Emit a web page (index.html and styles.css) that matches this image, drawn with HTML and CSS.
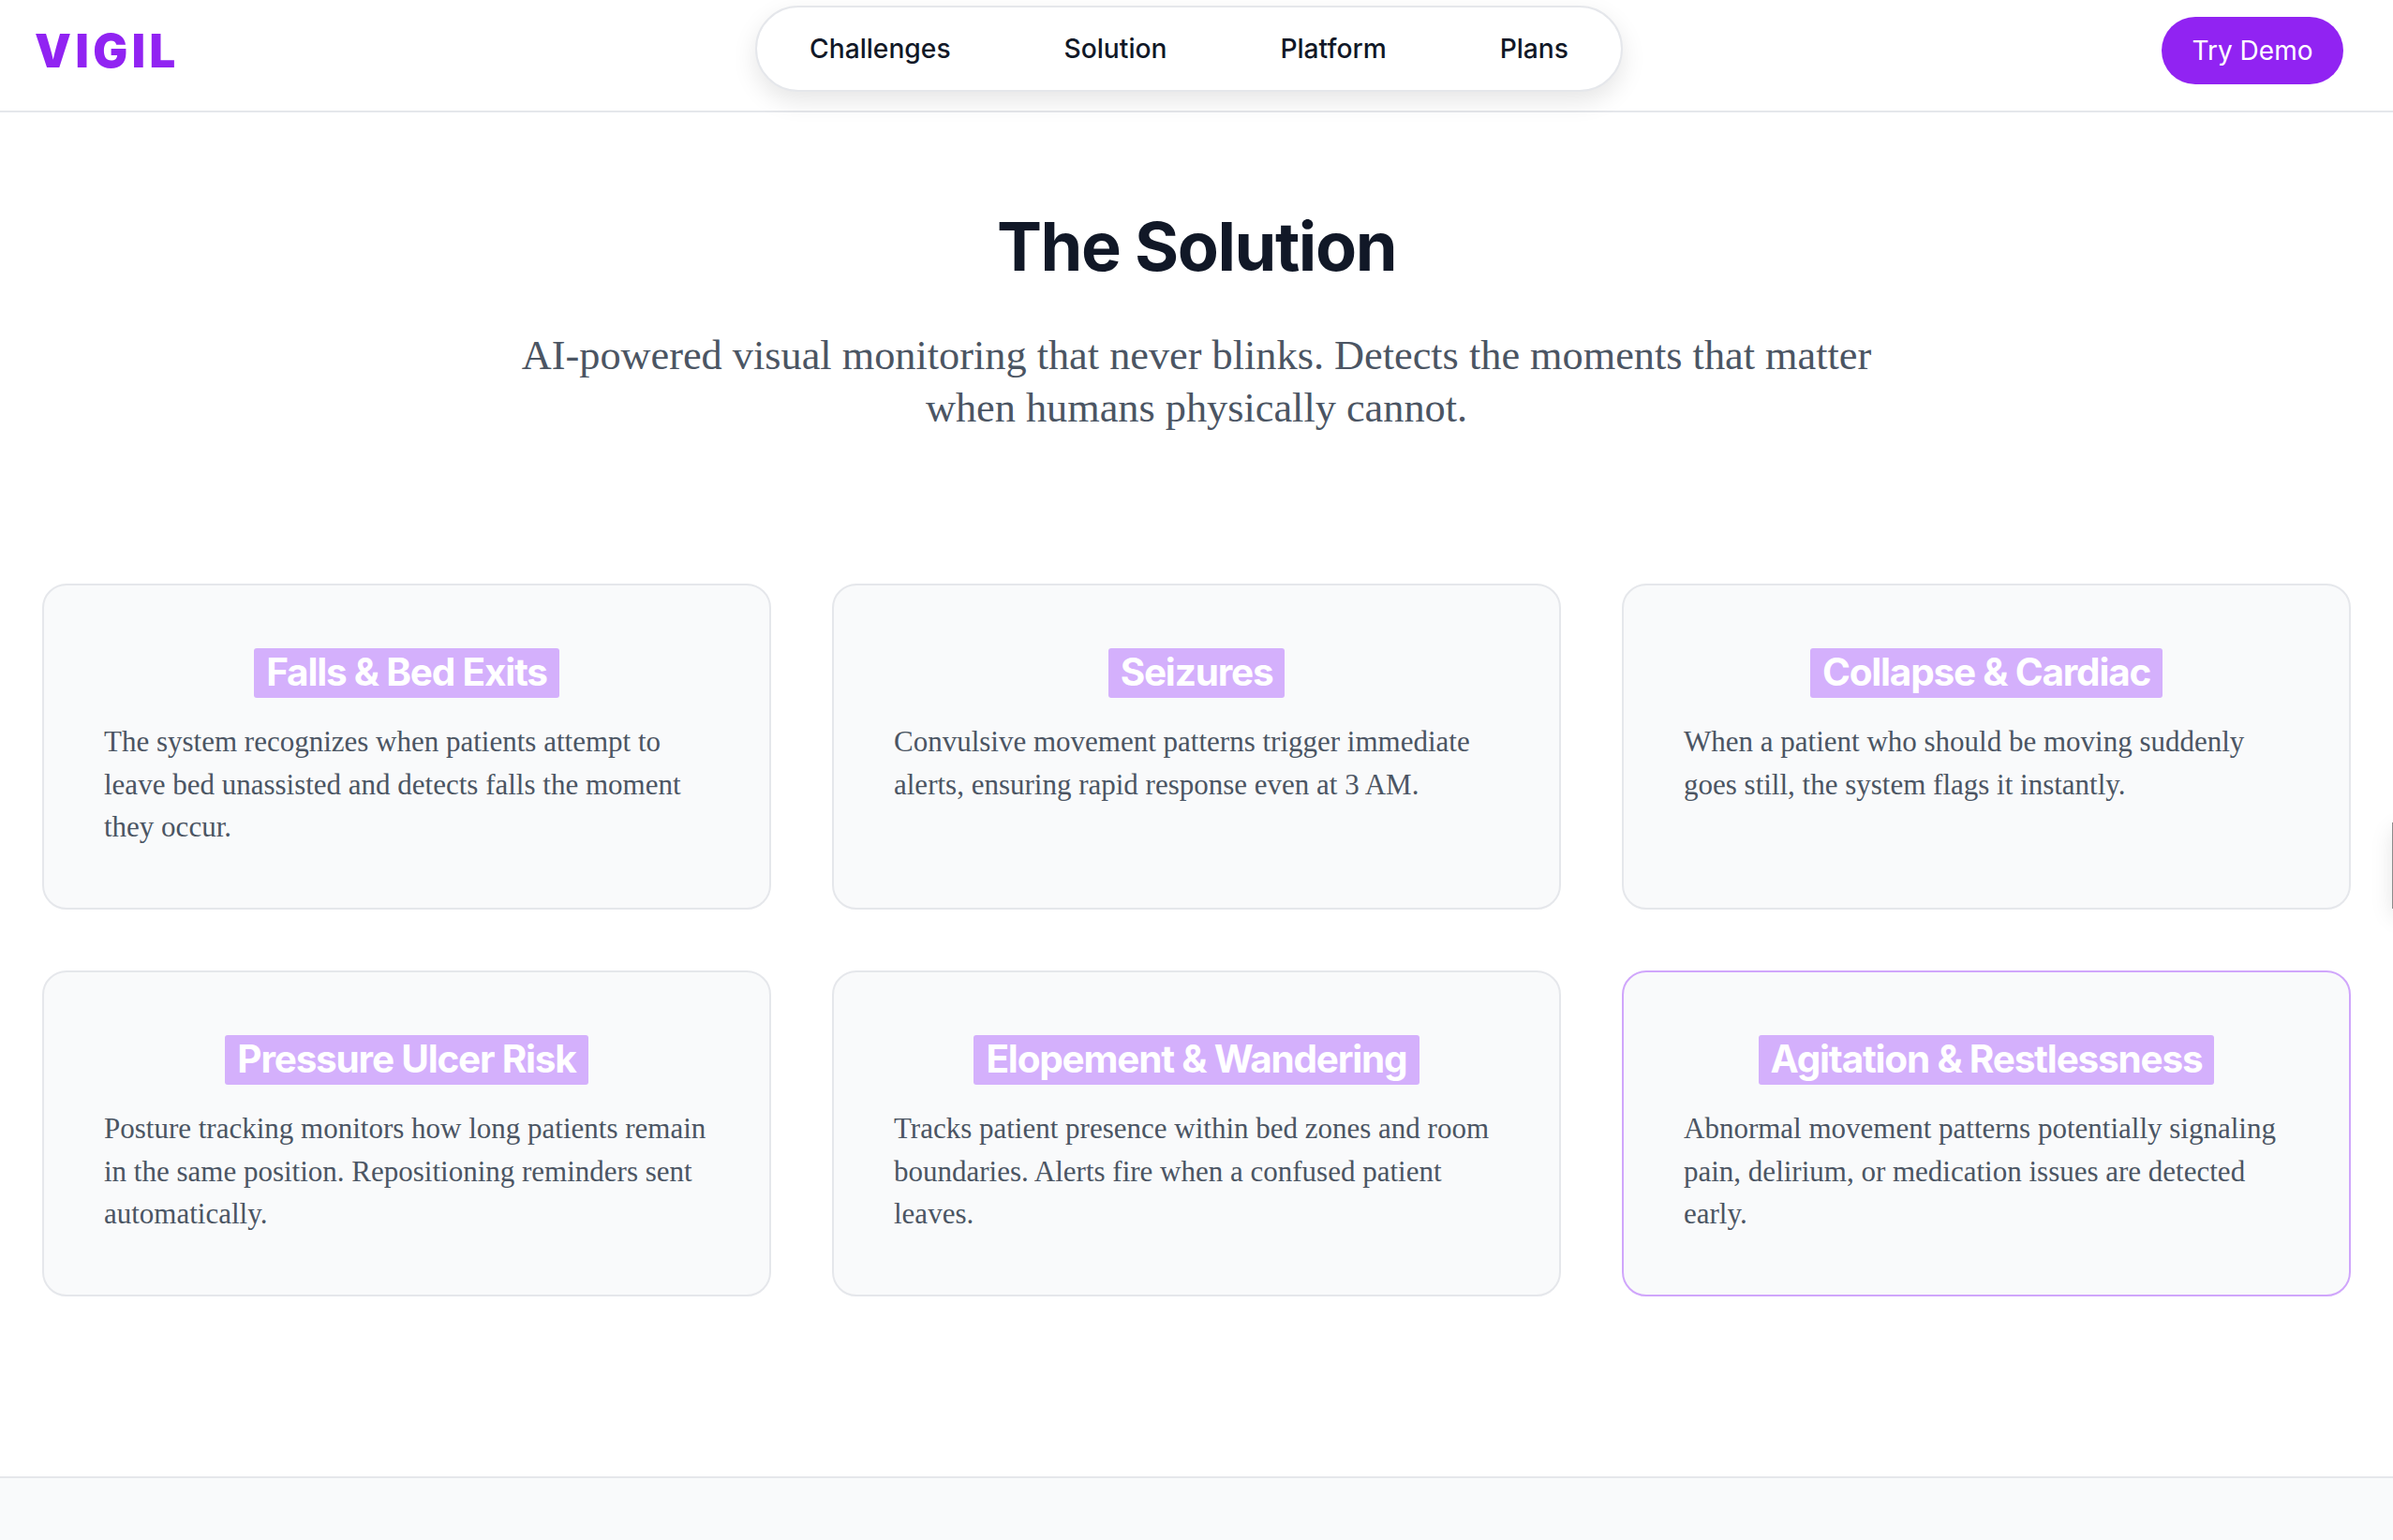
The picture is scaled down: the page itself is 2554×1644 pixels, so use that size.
FILE: index.html
```html
<!DOCTYPE html>
<html lang="en">
<head>
  <meta charset="UTF-8" />
  <meta name="viewport" content="width=device-width, initial-scale=1" />
  <title>Vigil - The Solution</title>
  <link rel="stylesheet" href="styles.css">
</head>
<body>

  <!-- Top bar -->
  <header class="topbar">
    <a class="logo" href="#">VIGIL</a>
    <nav class="navPill">
      <a href="#">Challenges</a>
      <a href="#">Solution</a>
      <a href="#">Platform</a>
      <a href="#">Plans</a>
    </nav>
    <a class="demoBtn" href="#">Try Demo</a>
  </header>

  <!-- Solution section -->
  <main class="solution">
    <h1>The Solution</h1>
    <p class="lead">AI-powered visual monitoring that never blinks. Detects the moments that matter<br>when humans physically cannot.</p>

    <div class="cardGrid">
      <article class="card">
        <h3><span>Falls &amp; Bed Exits</span></h3>
        <p>The system recognizes when patients attempt to<br>leave bed unassisted and detects falls the moment<br>they occur.</p>
      </article>
      <article class="card">
        <h3><span>Seizures</span></h3>
        <p>Convulsive movement patterns trigger immediate<br>alerts, ensuring rapid response even at 3 AM.</p>
      </article>
      <article class="card">
        <h3><span>Collapse &amp; Cardiac</span></h3>
        <p>When a patient who should be moving suddenly<br>goes still, the system flags it instantly.</p>
      </article>
      <article class="card">
        <h3><span>Pressure Ulcer Risk</span></h3>
        <p>Posture tracking monitors how long patients remain<br>in the same position. Repositioning reminders sent<br>automatically.</p>
      </article>
      <article class="card">
        <h3><span>Elopement &amp; Wandering</span></h3>
        <p>Tracks patient presence within bed zones and room<br>boundaries. Alerts fire when a confused patient<br>leaves.</p>
      </article>
      <article class="card cardActive">
        <h3><span>Agitation &amp; Restlessness</span></h3>
        <p>Abnormal movement patterns potentially signaling<br>pain, delirium, or medication issues are detected<br>early.</p>
      </article>
    </div>
  </main>

  <footer class="nextSection"></footer>

  <!-- Sliver of a panel parked just off the right edge -->
  <div class="edgePanel"></div>

</body>
</html>
```

FILE: styles.css
```css
/* Basic Reset */
* {
  box-sizing: border-box;
}

html,
body {
  height: 100%;
}

body {
  margin: 0;
  background: #fff;
  color: #111827;
  font-family: Inter, "Liberation Sans", sans-serif;
  display: flex;
  flex-direction: column;
  overflow: hidden;
}

a {
  text-decoration: none;
}

/* Top bar */
.topbar {
  height: 120px;
  flex: none;
  display: flex;
  align-items: center;
  padding: 0 53px 10px 37px;
  border-bottom: 2px solid #e5e7eb;
}

.logo {
  width: 148px;
  color: #9123f2;
  font-size: 49px;
  font-weight: 900;
  letter-spacing: 4.5px;
  line-height: 1;
  white-space: nowrap;
}

.navPill {
  margin-left: 621px;
  margin-bottom: 4px;
  height: 92px;
  width: 926px;
  padding: 0 56px;
  display: flex;
  align-items: center;
  justify-content: space-between;
  background: #fff;
  border: 2px solid #e5e7eb;
  border-radius: 46px;
  box-shadow: 0 10px 26px rgba(0, 0, 0, 0.1);
}

.navPill a {
  color: #111827;
  font-size: 28.2px;
  font-weight: 500;
}

.demoBtn {
  margin-left: auto;
  width: 194px;
  height: 72px;
  display: flex;
  align-items: center;
  justify-content: center;
  background: #9123f2;
  color: #fff;
  font-size: 28px;
  border-radius: 36px;
}

/* Solution section */
.solution {
  flex: 1;
  padding: 99px 45px 0;
  text-align: center;
}

h1 {
  margin: 0;
  font-size: 72px;
  font-weight: 700;
  line-height: 88px;
  letter-spacing: -1.44px;
}

.lead {
  margin: 45px 0 0;
  color: #4b5563;
  font-family: "Liberation Serif", serif;
  font-size: 44.3px;
  line-height: 56px;
}

.cardGrid {
  margin-top: 159px;
  display: grid;
  grid-template-columns: repeat(3, 1fr);
  gap: 65px;
}

.card {
  height: 348px;
  padding: 67px 64px 0;
  background: #f9fafb;
  border: 2px solid #e5e7eb;
  border-radius: 26px;
}

.cardActive {
  border-color: #d0a6fb;
}

.card h3 {
  margin: 0 0 24px;
  height: 53px;
  font-size: 40.5px;
  font-weight: 700;
  line-height: 51px;
  letter-spacing: -1.2px;
}

.card h3 span {
  display: inline-block;
  padding: 0 13px 2px;
  background: #d4b0fc;
  color: #fff;
  border-radius: 3px;
}

.card p {
  margin: 0;
  color: #4b5563;
  font-family: "Liberation Serif", serif;
  font-size: 31px;
  line-height: 45.6px;
  text-align: left;
}

.nextSection {
  flex: none;
  height: 68px;
  background: #f9fafb;
  border-top: 2px solid #e5e7eb;
}

.edgePanel {
  position: fixed;
  left: 2553px;
  top: 878px;
  width: 40px;
  height: 92px;
  background: #8c8c8c;
  box-shadow: 0 8px 24px rgba(0, 0, 0, 0.1);
}
```
